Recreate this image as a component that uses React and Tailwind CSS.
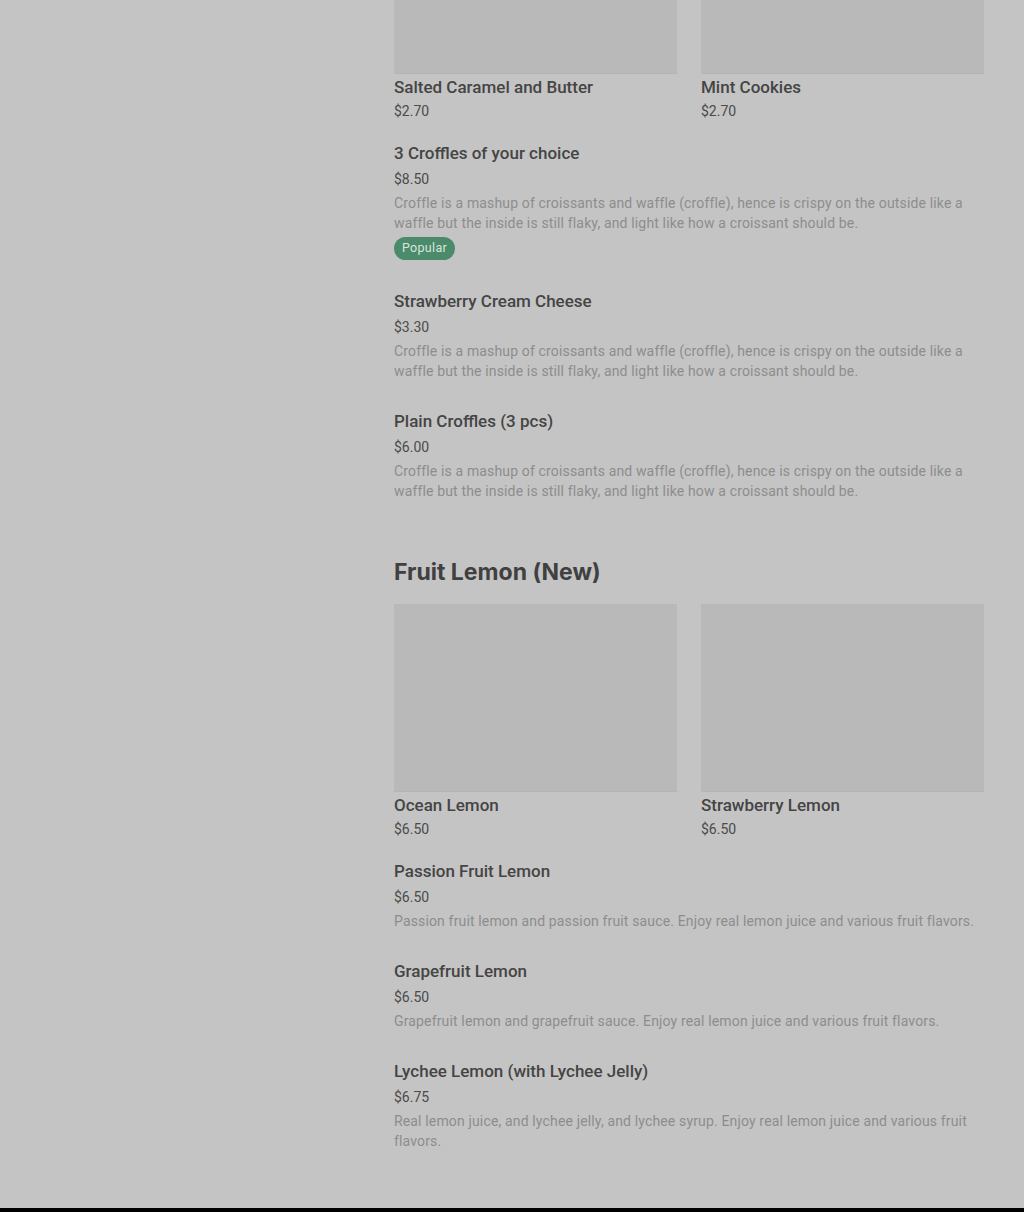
import React from "react";

const croffleDesc =
  "Croffle is a mashup of croissants and waffle (croffle), hence is crispy on the outside like a waffle but the inside is still flaky, and light like how a croissant should be.";

const sections = [
  {
    title: null,
    cards: [
      { name: "Salted Caramel and Butter", price: "$2.70" },
      { name: "Mint Cookies", price: "$2.70" },
    ],
    items: [
      { name: "3 Croffles of your choice", price: "$8.50", desc: croffleDesc, popular: true },
      { name: "Strawberry Cream Cheese", price: "$3.30", desc: croffleDesc },
      { name: "Plain Croffles (3 pcs)", price: "$6.00", desc: croffleDesc },
    ],
  },
  {
    title: "Fruit Lemon (New)",
    cards: [
      { name: "Ocean Lemon", price: "$6.50" },
      { name: "Strawberry Lemon", price: "$6.50" },
    ],
    items: [
      {
        name: "Passion Fruit Lemon",
        price: "$6.50",
        desc: "Passion fruit lemon and passion fruit sauce. Enjoy real lemon juice and various fruit flavors.",
      },
      {
        name: "Grapefruit Lemon",
        price: "$6.50",
        desc: "Grapefruit lemon and grapefruit sauce. Enjoy real lemon juice and various fruit flavors.",
      },
      {
        name: "Lychee Lemon (with Lychee Jelly)",
        price: "$6.75",
        desc: "Real lemon juice, and lychee jelly, and lychee syrup. Enjoy real lemon juice and various fruit flavors.",
      },
    ],
  },
];

const Card = ({ name, price }) => (
  <div className="flex flex-col">
    <div className="h-[188px] bg-[#b9b9b9] border-b border-[#b4b4b4]" />
    <div className="mt-[1px] text-[17px] leading-6 font-medium text-[#454545]">{name}</div>
    <div className="mt-[2px] text-[14px] leading-5 text-[#4b4b4b]">{price}</div>
  </div>
);

const Item = ({ name, price, desc, popular }) => (
  <div className="flex flex-col pt-[20px] pb-[8px]">
    <div className="text-[17px] leading-6 font-medium text-[#454545]">{name}</div>
    <div className="mt-[4px] text-[14px] leading-5 text-[#4b4b4b]">{price}</div>
    <div className="mt-[4px] text-[14px] leading-5 tracking-[0.15px] text-[#8d8d8d]">{desc}</div>
    {popular && (
      <div className="mt-[4px] mb-[1px] self-start rounded-full bg-[#4b8a6a] px-2 h-[23px] flex items-center text-[12.5px] tracking-[0.3px] text-[#d6e6dc]">
        Popular
      </div>
    )}
  </div>
);

export default function App() {
  return (
    <div
      className="min-h-screen bg-[#c4c4c4] flex flex-col overflow-hidden"
      style={{ fontFamily: "Roboto, 'Liberation Sans', sans-serif" }}
    >
      <div className="flex flex-1">
        <aside className="w-[394px] shrink-0" />
        <main className="w-[590px] -mt-[114px] pb-[49px]">
          {sections.map((s, i) => (
            <section key={i} className={i > 0 ? "mt-[47px]" : ""}>
              {s.title && (
                <h2
                  className="text-[23px] leading-8 font-bold text-[#404040] mb-[16px]"
                  style={{ fontFamily: "Inter, sans-serif" }}
                >
                  {s.title}
                </h2>
              )}
              <div className="grid grid-cols-2 gap-6">
                {s.cards.map((c) => (
                  <Card key={c.name} {...c} />
                ))}
              </div>
              <div className="flex flex-col">
                {s.items.map((it) => (
                  <Item key={it.name} {...it} />
                ))}
              </div>
            </section>
          ))}
        </main>
      </div>
      <footer className="h-[120px] bg-black" />
    </div>
  );
}
